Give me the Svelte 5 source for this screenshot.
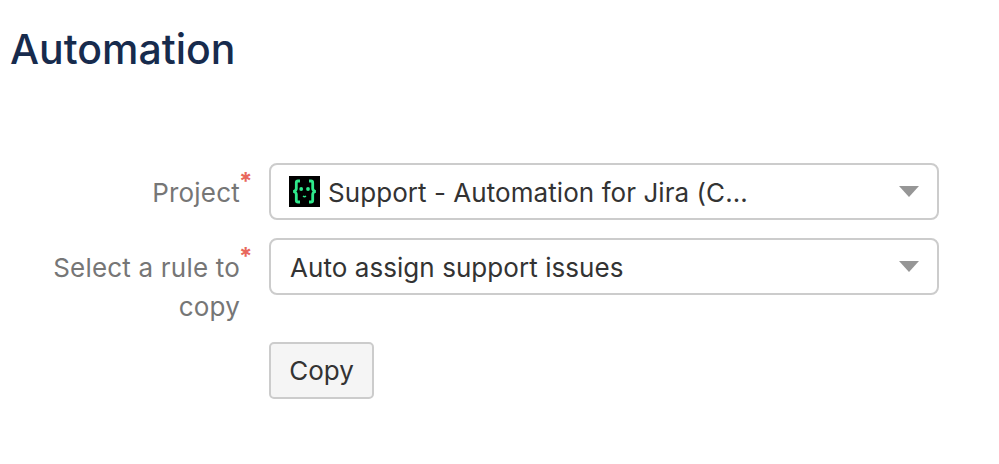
<script>
  const fields = [
    { label: 'Project', value: 'Support - Automation for Jira (C...', icon: true },
    { label: 'Select a rule to copy', value: 'Auto assign support issues', icon: false }
  ];
</script>

<div class="page">
  <h1>Automation</h1>
  <form class="form">
    {#each fields as f}
      <div class="row">
        <div class="label-wrap">
          <span class="label">{f.label}</span>
          <span class="star">*</span>
        </div>
        <div class="select">
          {#if f.icon}
            <svg class="avatar" viewBox="0 0 31 31" width="31" height="31" aria-hidden="true">
              <rect width="31" height="31" fill="#000" />
              <path d="M11 5H9Q7.3 5 7.3 6.8V12.6Q7.3 14.8 4.4 15.5Q7.3 16.2 7.3 18.4V24.2Q7.3 26 9 26H11M20 5H22Q23.7 5 23.7 6.8V12.6Q23.7 14.8 26.6 15.5Q23.7 16.2 23.7 18.4V24.2Q23.7 26 22 26H20" fill="none" stroke="#2fe98c" stroke-width="2.8" />
              <circle cx="12.2" cy="13" r="1.9" fill="#2fe98c" />
              <circle cx="19" cy="13" r="1.9" fill="#2fe98c" />
              <path d="M14 20Q15.5 21.3 17 20" fill="none" stroke="#2fe98c" stroke-width="1.4" />
            </svg>
          {/if}
          <span class="value">{f.value}</span>
          <span class="caret"></span>
        </div>
      </div>
    {/each}
    <div class="actions">
      <button type="button" class="copy">Copy</button>
    </div>
  </form>
</div>

<style>
  :global(body) {
    margin: 0;
    background: #fff;
  }
  .page {
    width: 999px;
    height: 464px;
    overflow: hidden;
    font-family: Inter, "Liberation Sans", sans-serif;
    padding: 23px 0 0 10px;
    box-sizing: border-box;
  }
  h1 {
    margin: 0;
    font-size: 41px;
    line-height: 52px;
    font-weight: 500;
    color: #172b4d;
  }
  .form {
    margin-top: 88px;
    width: 929px;
    display: flex;
    flex-direction: column;
    gap: 16px;
  }
  .row {
    display: flex;
  }
  .label-wrap {
    width: 230px;
    flex: none;
    position: relative;
    text-align: right;
    padding-top: 10px;
    font-size: 26px;
    line-height: 39px;
    letter-spacing: 0.2px;
    color: #767676;
  }
  .label {
    display: block;
  }
  .star {
    position: absolute;
    left: 229px;
    top: 4px;
    color: #e8685c;
    font-size: 24px;
    font-weight: 700;
    line-height: 30px;
  }
  .select {
    margin-left: 29px;
    margin-bottom: 2px;
    flex: 1;
    height: 57px;
    box-sizing: border-box;
    border: 2px solid #cccccc;
    border-radius: 8px;
    background: #fff;
    display: flex;
    align-items: center;
    padding: 0 18px 0 19px;
    font-size: 26px;
    letter-spacing: 0.06px;
    color: #333;
  }
  .avatar {
    flex: none;
    margin: 0 8px 0 -1px;
  }
  .value {
    flex: 1;
    white-space: nowrap;
    padding-top: 1px;
  }
  .caret {
    width: 0;
    height: 0;
    border-left: 10px solid transparent;
    border-right: 10px solid transparent;
    border-top: 11px solid #969696;
  }
  .actions {
    margin-left: 259px;
  }
  .copy {
    width: 105px;
    height: 57px;
    box-sizing: border-box;
    border: 2px solid #cccccc;
    border-radius: 5px;
    background: #f5f5f5;
    font-family: inherit;
    font-size: 26px;
    color: #333;
    padding: 0;
    display: block;
  }
</style>
